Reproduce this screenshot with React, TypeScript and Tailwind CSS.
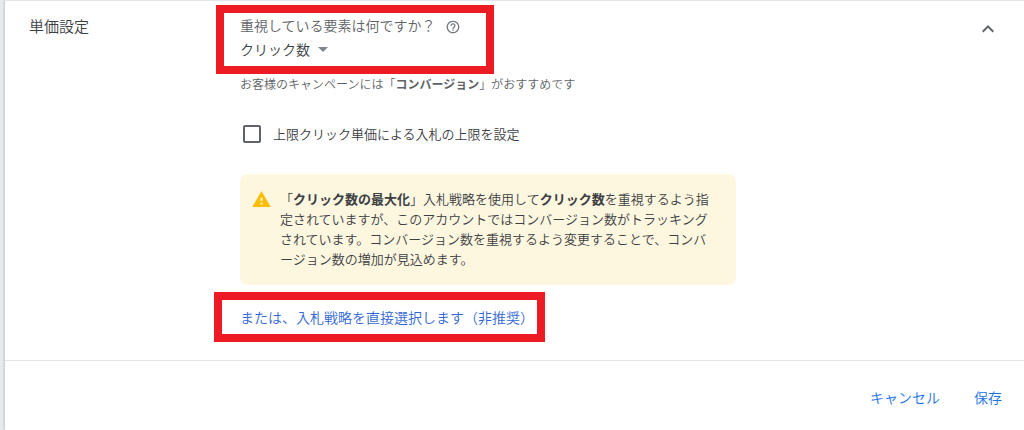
import type { ReactNode } from 'react'

const strategies = ['クリック数', 'コンバージョン', 'コンバージョン値', 'インプレッション シェア']

function HelpIcon() {
  return (
    <svg viewBox="1 1 22 22" className="size-[14px] fill-[#70757a]" aria-hidden="true">
      <path d="M11 18h2v-2h-2v2zm1-16C6.480 2 2 6.480 2 12s4.480 10 10 10 10-4.480 10-10S17.520 2 12 2zm0 18c-4.410 0-8-3.590-8-8s3.590-8 8-8 8 3.590 8 8-3.590 8-8 8zm0-14c-2.210 0-4 1.790-4 4h2c0-1.100.9-2 2-2s2 .9 2 2c0 2-3 1.750-3 5h2c0-2.250 3-2.500 3-5 0-2.210-1.790-4-4-4z" />
    </svg>
  )
}

function CollapseIcon() {
  return (
    <svg viewBox="0 0 24 24" className="size-6 fill-[#5f6368]" aria-hidden="true">
      <path d="M12 8l-6 6 1.410 1.410L12 10.830l4.590 4.580L18 14z" />
    </svg>
  )
}

function WarningIcon() {
  return (
    <svg viewBox="1 2 22 19" className="mt-[2px] h-4 w-[19px] shrink-0 fill-[#fbbc04]" aria-hidden="true">
      <path d="M1 21h22L12 2 1 21zm12-3h-2v-2h2v2zm0-4h-2v-4h2v4z" />
      <path className="fill-[#fef0c3]" d="M11 10h2v4h-2zM11 16h2v2h-2z" />
    </svg>
  )
}

function WarningBox({ children }: { children: ReactNode }) {
  return (
    <div className="flex w-full max-w-[496px] gap-[9px] rounded-lg bg-[#fef7e0] pt-[15px] pr-[22px] pb-4 pl-3 text-[13px] leading-5 text-[#3c4043]">
      <WarningIcon />
      <p>{children}</p>
    </div>
  )
}

export default function App() {
  return (
    <div
      lang="ja"
      className="flex min-h-screen bg-[#e8eaed] pl-[5px] font-['Noto_Sans_CJK_JP','Noto_Sans',sans-serif] text-sm font-[350] text-[#3c4043]"
    >
      <div className="flex min-w-0 flex-1 flex-col border-t border-[#e3e5e8] bg-white shadow-[0_0_3px_rgba(60,64,67,0.4)]">
        <section className="flex items-start border-b border-[#e3e5e8] pt-1 pr-6 pb-[18px] pl-6">
          <h2 className="w-[211px] shrink-0 pt-[11px] text-[15px] leading-5">単価設定</h2>

          <div className="flex min-w-0 flex-1 flex-col items-start">
            <div className="-ml-6 w-[278px] border-8 border-[#ed1c24] px-4 pb-[5px]">
              <div className="flex h-6 items-center gap-[10px]">
                <label htmlFor="focus" className="text-[#5f6368]">
                  重視している要素は何ですか？
                </label>
                <button type="button" aria-label="ヘルプ" className="pt-1">
                  <HelpIcon />
                </button>
              </div>
              <div className="grid h-6 w-[88px] items-center">
                <select
                  id="focus"
                  className="col-start-1 row-start-1 w-full appearance-none bg-transparent leading-6 outline-none"
                >
                  {strategies.map((name) => (
                    <option key={name}>{name}</option>
                  ))}
                </select>
                <svg
                  viewBox="0 0 10 5"
                  className="pointer-events-none col-start-1 row-start-1 h-[5px] w-[10px] justify-self-end fill-[#80868b]"
                  aria-hidden="true"
                >
                  <path d="M0 0h10L5 5z" />
                </svg>
              </div>
            </div>

            <p className="text-xs leading-5 text-[#5f6368]">
              お客様のキャンペーンには「<b className="font-bold">コンバージョン</b>」がおすすめです
            </p>

            <label className="mt-[30px] flex items-center gap-3 pl-[3px] text-[13px] leading-5">
              <input type="checkbox" className="size-[18px] appearance-none rounded-[2px] border-2 border-[#5f6368] bg-white" />
              上限クリック単価による入札の上限を設定
            </label>

            <div className="mt-[30px] w-full">
              <WarningBox>
                「<b className="font-bold">クリック数の最大化</b>」入札戦略を使用して
                <b className="font-bold">クリック数</b>
                を重視するよう指定されていますが、このアカウントではコンバージョン数がトラッキングされています。コンバージョン数を重視するよう変更することで、コンバージョン数の増加が見込めます。
              </WarningBox>
            </div>

            <div className="mt-[7px] -ml-[26px] w-[331px] border-8 border-[#ed1c24] py-[6px] pl-[18px]">
              <a href="#strategy" className="block leading-[22px] whitespace-nowrap text-[#3367d6]">
                または、入札戦略を直接選択します（非推奨）
              </a>
            </div>
          </div>

          <button type="button" aria-label="折りたたむ" className="mt-3">
            <CollapseIcon />
          </button>
        </section>

        <footer className="flex justify-end gap-[34px] pt-6 pr-[22px] pb-5 leading-6 text-[#1a73e8]">
          <button type="button">キャンセル</button>
          <button type="button">保存</button>
        </footer>
      </div>
    </div>
  )
}
